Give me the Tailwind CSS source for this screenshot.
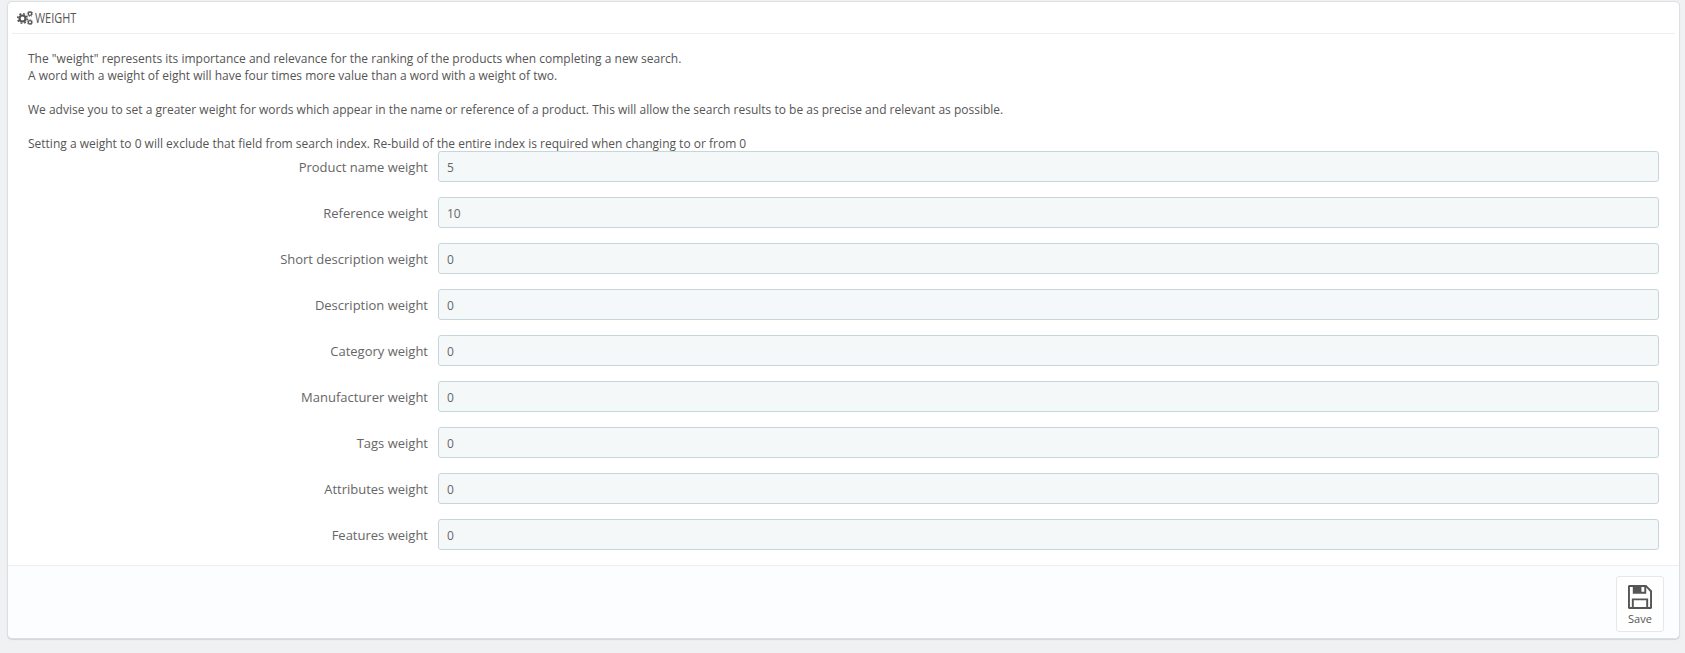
<!DOCTYPE html>
<html><head><meta charset="utf-8">
<script src="https://cdn.jsdelivr.net/npm/@tailwindcss/browser@4"></script>
</head>
<body class="bg-[#eff1f2] font-['Open_Sans',sans-serif] text-[12px] leading-[17px] text-[#555]">
<div class="h-[653px] pt-[1px] pl-[7px] pr-[5px] overflow-hidden">
<section class="h-[638px] bg-white border border-[#d9dfe2] rounded-[5px] shadow-[0_1px_1px_rgba(0,0,0,0.12)] flex flex-col">
  <header class="h-[32px] mx-[4px] border-b border-[#eee] flex items-center pl-[5px] gap-[2px] shrink-0">
    <svg class="w-[16px] h-[14px]" viewBox="0 0 16 14" fill="none" stroke="#555">
      <circle cx="5.500" cy="7.500" r="3" stroke-width="2.200"/>
      <circle cx="5.500" cy="7.500" r="4.800" stroke-width="1.600" stroke-dasharray="1.900 1.870"/>
      <circle cx="13" cy="2.700" r="1.700" stroke-width="1.300"/>
      <circle cx="13" cy="11.300" r="1.700" stroke-width="1.300"/>
      <circle cx="13" cy="2.700" r="2.800" stroke-width="0.800" stroke-dasharray="1.100 1.100"/>
      <circle cx="13" cy="11.300" r="2.800" stroke-width="0.800" stroke-dasharray="1.100 1.100"/>
    </svg>
    <span class="text-[14px] text-[#555] inline-block origin-left scale-x-[0.78] uppercase leading-none">Weight</span>
  </header>
  <div class="pl-[20px] pt-[16px] h-[117px] shrink-0 text-[#555]">
    <p>The "weight" represents its importance and relevance for the ranking of the products when completing a new search.</p>
    <p>A word with a weight of eight will have four times more value than a word with a weight of two.</p>
    <p class="mt-[17px]">We advise you to set a greater weight for words which appear in the name or reference of a product. This will allow the search results to be as precise and relevant as possible.</p>
    <p class="mt-[17px]">Setting a weight to 0 will exclude that field from search index. Re-build of the entire index is required when changing to or from 0</p>
  </div>
  <form class="flex flex-col gap-[15px] pr-[20px]">
    <div class="flex items-center h-[31px]"><label class="w-[420px] pt-[2px] text-right text-[13px] text-[#666]">Product name weight</label><div class="ml-[10px] flex-1 h-[31px] bg-[#f5f8f9] border border-[#c7d6db] rounded-[3px] flex items-center px-[8px] pt-[2px] text-[#666]">5</div></div>
    <div class="flex items-center h-[31px]"><label class="w-[420px] pt-[2px] text-right text-[13px] text-[#666]">Reference weight</label><div class="ml-[10px] flex-1 h-[31px] bg-[#f5f8f9] border border-[#c7d6db] rounded-[3px] flex items-center px-[8px] pt-[2px] text-[#666]">10</div></div>
    <div class="flex items-center h-[31px]"><label class="w-[420px] pt-[2px] text-right text-[13px] text-[#666]">Short description weight</label><div class="ml-[10px] flex-1 h-[31px] bg-[#f5f8f9] border border-[#c7d6db] rounded-[3px] flex items-center px-[8px] pt-[2px] text-[#666]">0</div></div>
    <div class="flex items-center h-[31px]"><label class="w-[420px] pt-[2px] text-right text-[13px] text-[#666]">Description weight</label><div class="ml-[10px] flex-1 h-[31px] bg-[#f5f8f9] border border-[#c7d6db] rounded-[3px] flex items-center px-[8px] pt-[2px] text-[#666]">0</div></div>
    <div class="flex items-center h-[31px]"><label class="w-[420px] pt-[2px] text-right text-[13px] text-[#666]">Category weight</label><div class="ml-[10px] flex-1 h-[31px] bg-[#f5f8f9] border border-[#c7d6db] rounded-[3px] flex items-center px-[8px] pt-[2px] text-[#666]">0</div></div>
    <div class="flex items-center h-[31px]"><label class="w-[420px] pt-[2px] text-right text-[13px] text-[#666]">Manufacturer weight</label><div class="ml-[10px] flex-1 h-[31px] bg-[#f5f8f9] border border-[#c7d6db] rounded-[3px] flex items-center px-[8px] pt-[2px] text-[#666]">0</div></div>
    <div class="flex items-center h-[31px]"><label class="w-[420px] pt-[2px] text-right text-[13px] text-[#666]">Tags weight</label><div class="ml-[10px] flex-1 h-[31px] bg-[#f5f8f9] border border-[#c7d6db] rounded-[3px] flex items-center px-[8px] pt-[2px] text-[#666]">0</div></div>
    <div class="flex items-center h-[31px]"><label class="w-[420px] pt-[2px] text-right text-[13px] text-[#666]">Attributes weight</label><div class="ml-[10px] flex-1 h-[31px] bg-[#f5f8f9] border border-[#c7d6db] rounded-[3px] flex items-center px-[8px] pt-[2px] text-[#666]">0</div></div>
    <div class="flex items-center h-[31px]"><label class="w-[420px] pt-[2px] text-right text-[13px] text-[#666]">Features weight</label><div class="ml-[10px] flex-1 h-[31px] bg-[#f5f8f9] border border-[#c7d6db] rounded-[3px] flex items-center px-[8px] pt-[2px] text-[#666]">0</div></div>
  </form>
  <footer class="mt-[15px] flex-1 bg-[#fcfdfe] border-t border-[#eee] rounded-b-[5px] flex justify-end items-start pt-[10px] pr-[15px]">
    <button class="w-[48px] h-[56px] bg-white border border-[#e4e8ea] rounded-[3px] flex flex-col items-center pt-[8px] text-[#555] text-[11px] leading-[15px]">
      <svg class="w-[24px] h-[24px]" viewBox="0 0 25 25" fill="#555"><path fill-rule="evenodd" d="M1 0h18l6 6v18l-1 1H1l-1-1V1zM2 2v21h2v-9h17v9h2V7l-4-4.500V9H5V2zM6 16v7h13v-7zM14 2v5h3V2z"/></svg>
      <span class="mt-[2px]">Save</span>
    </button>
  </footer>
</section>
</div>
</body></html>
